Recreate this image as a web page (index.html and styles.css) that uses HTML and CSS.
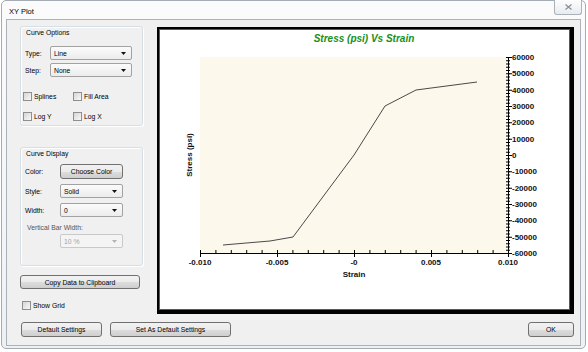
FILE: index.html
```html
<!DOCTYPE html>
<html lang="en">

<head>
    <meta charset="UTF-8" />
    <title>XY Plot</title>
    <link rel="stylesheet" href="styles.css">
</head>

<body>

    <div class="window">
        <div class="titlebar">
            <span class="title">XY Plot</span>
            <span class="close">
                <svg width="7" height="6" viewBox="0 0 7 6"><path d="M0.5 0.5l6 5M6.5 0.5l-6 5" stroke="#8a8f96" stroke-width="1.2" fill="none"/></svg>
            </span>
        </div>

        <div class="client">
            <div class="main">
                <div class="side">
                    <div class="group group-options">
                        <div class="group-title">Curve Options</div>

                        <div class="field field-first">
                            <span class="label">Type:</span>
                            <div class="combo combo-wide"><span>Line</span><svg class="arrow" width="5" height="3" viewBox="0 0 5 3"><path d="M0 0h5L2.5 3z"/></svg></div>
                        </div>
                        <div class="field field-next">
                            <span class="label">Step:</span>
                            <div class="combo combo-wide"><span>None</span><svg class="arrow" width="5" height="3" viewBox="0 0 5 3"><path d="M0 0h5L2.5 3z"/></svg></div>
                        </div>

                        <div class="checks checks-first">
                            <div class="check"><span class="box"></span>Splines</div>
                            <div class="check"><span class="box"></span>Fill Area</div>
                        </div>
                        <div class="checks checks-next">
                            <div class="check"><span class="box"></span>Log Y</div>
                            <div class="check"><span class="box"></span>Log X</div>
                        </div>
                    </div>

                    <div class="group group-display">
                        <div class="group-title">Curve Display</div>

                        <div class="field field-color">
                            <span class="label label-wide">Color:</span>
                            <button class="btn btn-color">Choose Color</button>
                        </div>
                        <div class="field field-gap">
                            <span class="label label-wide">Style:</span>
                            <div class="combo"><span>Solid</span><svg class="arrow" width="5" height="3" viewBox="0 0 5 3"><path d="M0 0h5L2.5 3z"/></svg></div>
                        </div>
                        <div class="field field-gap">
                            <span class="label label-wide">Width:</span>
                            <div class="combo"><span>0</span><svg class="arrow" width="5" height="3" viewBox="0 0 5 3"><path d="M0 0h5L2.5 3z"/></svg></div>
                        </div>

                        <div class="bar-label">Vertical Bar Width:</div>
                        <div class="combo combo-disabled"><span>10 %</span><svg class="arrow" width="5" height="3" viewBox="0 0 5 3"><path d="M0 0h5L2.5 3z"/></svg></div>
                    </div>

                    <button class="btn btn-copy">Copy Data to Clipboard</button>

                    <div class="check check-grid"><span class="box"></span>Show Grid</div>
                </div>

                <div class="chart-frame">
                    <div class="chart">
                        <svg class="plot" width="409" height="279" viewBox="160 30 409 279">
                            <text class="chart-title" x="364" y="42" text-anchor="middle">Stress (psi) Vs Strain</text>

                            <rect x="200" y="57" width="308" height="196" fill="#fcf8ec"/>

                            <!-- curve -->
                            <polyline points="223,245 270,241 293,237 354,155 385,106 416,90 477,82" fill="none" stroke="#4a4a4a" stroke-width="1"/>

                            <!-- axes -->
                            <line x1="508.5" y1="57" x2="508.5" y2="254" stroke="#000"/>
                            <line x1="200" y1="253.5" x2="509" y2="253.5" stroke="#000"/>

                            <!-- ticks -->
                            <line x1="508" y1="57" x2="508" y2="254" stroke="#000" stroke-width="4" stroke-dasharray="1 2.2667"/>
                            <line x1="510" y1="57" x2="510" y2="254" stroke="#000" stroke-width="4" stroke-dasharray="1 15.3333"/>
                            <line x1="200" y1="251.5" x2="509" y2="251.5" stroke="#000" stroke-width="3" stroke-dasharray="1 14.4"/>
                            <line x1="200" y1="255" x2="509" y2="255" stroke="#000" stroke-width="4" stroke-dasharray="1 76"/>

                            <g class="tick-label">
                                <text x="512" y="60">60000</text>
                                <text x="512" y="76.3">50000</text>
                                <text x="512" y="92.7">40000</text>
                                <text x="512" y="109">30000</text>
                                <text x="512" y="125.3">20000</text>
                                <text x="512" y="141.7">10000</text>
                                <text x="512" y="158">0</text>
                                <text x="512" y="174.3">-10000</text>
                                <text x="512" y="190.7">-20000</text>
                                <text x="512" y="207">-30000</text>
                                <text x="512" y="223.3">-40000</text>
                                <text x="512" y="239.7">-50000</text>
                                <text x="512" y="256">-60000</text>
                            </g>

                            <g class="tick-label" text-anchor="middle">
                                <text x="200" y="265">-0.010</text>
                                <text x="277" y="265">-0.005</text>
                                <text x="354" y="265">-0</text>
                                <text x="431" y="265">0.005</text>
                                <text x="508" y="265">0.010</text>
                            </g>

                            <text class="axis-title" x="354" y="277" text-anchor="middle">Strain</text>
                            <text class="axis-title" transform="translate(192,155) rotate(-90)" text-anchor="middle">Stress (psi)</text>
                        </svg>
                    </div>
                </div>
            </div>

            <div class="footer">
                <button class="btn btn-default">Default Settings</button>
                <button class="btn btn-set">Set As Default Settings</button>
                <button class="btn btn-ok">OK</button>
            </div>
        </div>
    </div>

</body>

</html>
```

FILE: styles.css
```css
* {
    box-sizing: border-box;
    margin: 0;
    padding: 0;
}

body {
    background: #fff;
    font-family: "Liberation Sans", Arial, sans-serif;
    font-size: 6.8px;
    color: #000;
}

.window {
    width: 585px;
    height: 349px;
    margin-left: 1px;
    border: 1px solid #a3abb4;
    border-radius: 5px;
    background: linear-gradient(#fbfbfc, #eef1f4);
    padding: 0 4px 2px 4px;
    display: flex;
    flex-direction: column;
}

.titlebar {
    height: 18px;
    display: flex;
    justify-content: space-between;
    align-items: flex-start;
}

.title {
    font-size: 7.5px;
    line-height: 10px;
    padding: 6px 0 0 3px;
}

.close {
    width: 28px;
    height: 15px;
    margin: -1px -1px 0 0;
    border: 1px solid #a9b1ba;
    border-top: none;
    border-radius: 0 0 3px 3px;
    background: linear-gradient(#fdfdfd, #e8ebef);
    display: flex;
    align-items: center;
    justify-content: center;
}

.client {
    flex: 1;
    background: #f0f0f0;
    border: 1px solid #aab1b9;
    padding: 6px 6px 0 13px;
    display: flex;
    flex-direction: column;
}

.main {
    display: flex;
    gap: 14px;
}

.side {
    width: 123px;
    display: flex;
    flex-direction: column;
}

/* group boxes */
.group {
    border: 1px solid #d5dfe5;
    border-radius: 3px;
    box-shadow: inset 1px 1px #fff, 1px 1px #fff;
}

.group-options {
    height: 100px;
}

.group-display {
    height: 119px;
    margin-top: 21px;
}

.group-title {
    line-height: 9px;
    padding: 1px 0 0 5px;
}

.field {
    display: flex;
    align-items: center;
    padding-left: 4px;
}

.field-first {
    margin-top: 9px;
}

.field-next {
    margin-top: 3px;
}

.field-color {
    margin-top: 6px;
}

.field-gap {
    margin-top: 5px;
}

.label {
    width: 25px;
}

.label-wide {
    width: 35px;
}

/* combos */
.combo {
    width: 63px;
    height: 14px;
    border: 1px solid #a2a2a2;
    border-radius: 2px;
    background: linear-gradient(#fbfbfb, #ececec);
    display: flex;
    align-items: center;
    justify-content: space-between;
    padding: 0 5px 0 3px;
}

.combo-wide {
    width: 82px;
}

.arrow {
    fill: #111;
}

.combo-disabled {
    margin: 2px 0 0 39px;
    border-color: #c9c9c9;
    background: #f4f4f4;
    color: #a3a3a3;
}

.combo-disabled .arrow {
    fill: #b2b2b2;
}

.bar-label {
    margin-top: 7px;
    padding-left: 6px;
    line-height: 8px;
    color: #555;
}

/* check boxes */
.checks {
    display: flex;
    padding-left: 2px;
}

.checks-first {
    margin-top: 15px;
}

.checks-next {
    margin-top: 11px;
}

.check {
    width: 50px;
    display: flex;
    align-items: center;
    gap: 2px;
    line-height: 9px;
}

.box {
    width: 9px;
    height: 9px;
    border: 1px solid #8f8f8f;
    background: linear-gradient(135deg, #d6d6d6, #f8f8f8);
}

.check-grid {
    margin: 12px 0 0 2px;
}

/* buttons */
.btn {
    height: 15px;
    border: 1px solid #707070;
    border-radius: 3px;
    background: linear-gradient(#f2f2f2 0%, #ebebeb 50%, #dddddd 51%, #cfcfcf 100%);
    font-family: inherit;
    font-size: 6.8px;
    color: #000;
    display: flex;
    align-items: center;
    justify-content: center;
}

.btn-color {
    width: 63px;
}

.btn-copy {
    width: 120px;
    height: 14px;
    margin-top: 9px;
}

.footer {
    display: flex;
    gap: 8px;
    margin-top: 8px;
    padding-left: 1px;
}

.btn-default {
    width: 81px;
}

.btn-set {
    width: 121px;
}

.btn-ok {
    width: 46px;
    margin-left: auto;
}

/* chart */
.chart-frame {
    width: 417px;
    height: 287px;
    margin-top: 1px;
    background: #000;
    padding: 2px 4px 4px 2px;
}

.chart {
    height: 100%;
    border: 1px solid #a33a3a;
    background: #fff;
}

.plot {
    display: block;
    font-family: "Liberation Sans", Arial, sans-serif;
}

.chart-title {
    font-size: 10px;
    font-weight: bold;
    font-style: italic;
    fill: #14901a;
}

.tick-label text {
    font-size: 8px;
    font-weight: bold;
    fill: #111;
}

.axis-title {
    font-size: 8px;
    font-weight: bold;
    fill: #111;
}
```
